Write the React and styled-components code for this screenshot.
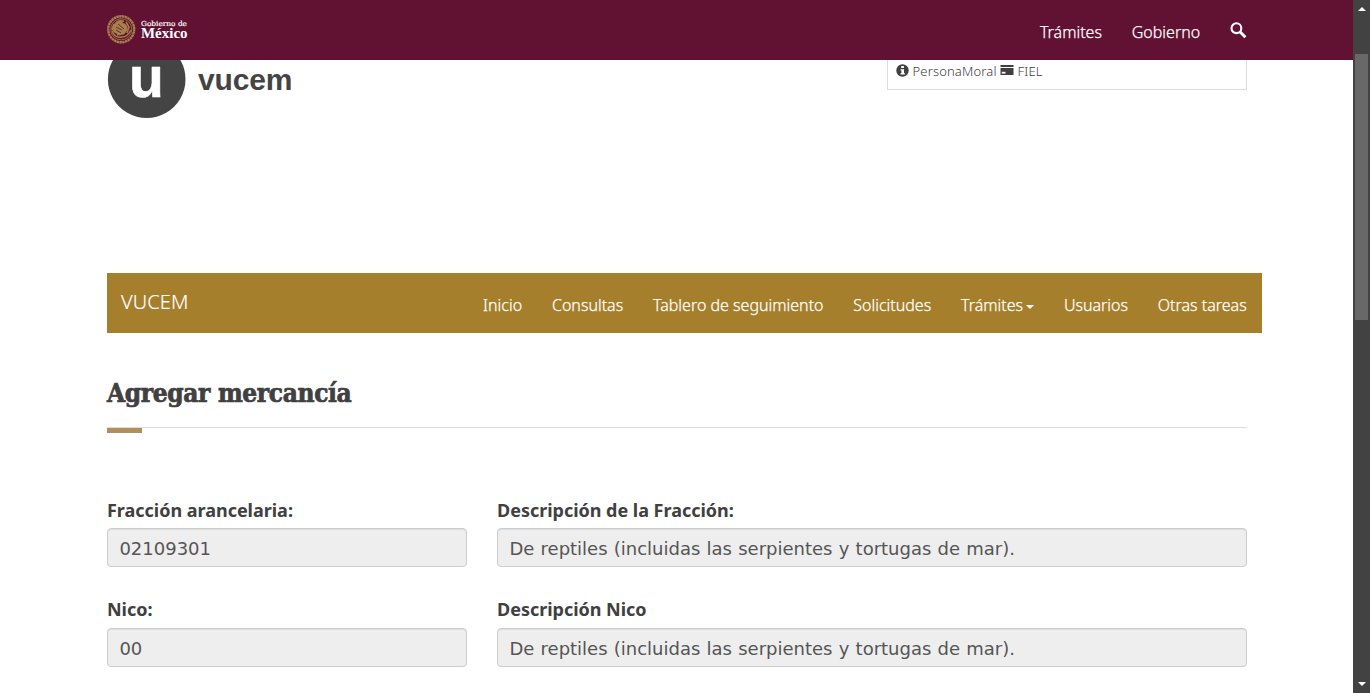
import React from "react";
import styled, { createGlobalStyle } from "styled-components";

const Global = createGlobalStyle`
  * { box-sizing: border-box; }
  html, body { margin: 0; padding: 0; overflow: hidden; background: #fff; }
  body { font-family: "Noto Sans", "Open Sans", sans-serif; color: #404041; }
`;

const Screen = styled.div`
  display: flex;
  width: 1370px;
  height: 693px;
  overflow: hidden;
`;
const Page = styled.div`
  flex: 1;
  min-width: 0;
`;
const TopBar = styled.header`
  height: 60px;
  padding: 0 106px 0 107px;
  background: #611232;
  display: flex;
  justify-content: space-between;
`;
const Crest = styled.svg`
  display: block;
  width: 90px;
  height: 60px;
`;
const TopLinks = styled.nav`
  display: flex;
  gap: 29.8px;
  height: 60px;
  padding-top: 3px;
  align-items: center;
`;
const Link = styled.a`
  display: flex;
  align-items: center;
  color: #fff;
  font-size: 16px;
  font-weight: 300;
  line-height: 24px;
  white-space: nowrap;
  -webkit-text-stroke: 0.25px #fff;
`;
const SearchIcon = styled.svg`
  width: 17px;
  height: 17px;
  margin-top: -2px;
`;
const Brand = styled.section`
  height: 213px;
  padding: 0 106px 0 107px;
  display: flex;
  justify-content: space-between;
  align-items: flex-start;
`;
const Logo = styled.svg`
  display: block;
  width: 200px;
  height: 60px;
  overflow: visible;
`;
const UserBox = styled.div`
  width: 360px;
  height: 30px;
  border: 1px solid #ddd;
  border-top: 0;
  padding: 2px 7.5px 0;
  display: flex;
  align-items: flex-start;
  font-size: 13px;
  line-height: 18px;
  font-weight: 300;
  letter-spacing: 0.15px;
`;
const UserIcon = styled.svg`
  width: ${(p) => p.$w}px;
  height: 13px;
  margin: 2px 4px 0 ${(p) => p.$left || 0}px;
`;
const NavBar = styled.nav`
  margin: 0 91px 0 107px;
  height: 60px;
  padding: 0 15.3px 0 14px;
  background: #a57f2c;
  display: flex;
  justify-content: space-between;
`;
const NavBrand = styled.span`
  color: #fff;
  font-size: 20px;
  font-weight: 300;
  line-height: 58px;
  letter-spacing: 0.1px;
  -webkit-text-stroke: 0.15px #fff;
`;
const NavLinks = styled.div`
  display: flex;
  gap: 29.8px;
  align-items: center;
  padding-top: 3px;
`;
const Caret = styled.i`
  margin: 5px 0 0 3px;
  border: 4px solid transparent;
  border-top-color: #fff;
  border-bottom: 0;
`;
const Main = styled.main`
  padding: 38px 106px 0 107px;
`;
const Title = styled.h1`
  margin: 0;
  height: 57px;
  border-bottom: 1px solid #ddd;
  font: bold 26px/44px "DejaVu Serif Condensed", "DejaVu Serif", serif;
  font-stretch: condensed;
  letter-spacing: -0.35px;
  white-space: nowrap;
  -webkit-text-stroke: 0.7px #404041;
`;
const Accent = styled.div`
  width: 35px;
  height: 5px;
  background: #b38e5d;
`;
const FormRow = styled.div`
  display: grid;
  grid-template-columns: 360px 750px;
  column-gap: 30px;
  margin-top: ${(p) => p.$top}px;
`;
const Field = styled.label`
  display: flex;
  flex-direction: column;
`;
const Label = styled.span`
  font-size: 18px;
  font-weight: 700;
  line-height: 25px;
  letter-spacing: -0.02px;
  height: ${(p) => p.$h}px;
`;
const Input = styled.input`
  width: 100%;
  height: 39px;
  padding: 2px 12px 0 11.4px;
  border: 1px solid #ccc;
  border-radius: 4px;
  background: #eee;
  box-shadow: inset 0 1px 1px rgba(0, 0, 0, 0.075);
  color: #555;
  font: 18px "DejaVu Sans", sans-serif;
  word-spacing: 0.5px;
`;
const ScrollBar = styled.aside`
  width: 17px;
  height: 693px;
  background: #424242;
  display: flex;
  flex-direction: column;
  align-items: center;
  justify-content: space-between;
  padding: 7px 2px;
`;
const Thumb = styled.div`
  width: 13px;
  height: 266px;
  margin: 43px 0 auto;
  background: #686868;
`;
const Arrow = styled.svg`
  width: 8px;
  height: 4px;
`;

const serif = '"DejaVu Serif Condensed", "DejaVu Serif", serif';

function GovernmentLogo() {
  return (
    <Crest viewBox="0 0 90 60">
      <g fill="none" stroke="#a7804b">
        <circle cx="14.2" cy="29.3" r="13" strokeWidth="2.4" strokeDasharray="2.4 .4" />
        <circle cx="14.2" cy="29.3" r="10.6" strokeWidth=".8" />
        <path d="M7 25c2-4 6-6 10-4l-3 2c4 0 7 3 6 7l-3 4-5 1-4-3-2-4z" fill="#a7804b" strokeWidth=".8" />
        <path d="M5 31c2 5 6 7 10 6 4 0 7-3 9-7M7 24l-2 5 4 4M19 22l3 5-2 6M10 35l7-3" strokeWidth="1.5" />
        <path d="M9 27l6 3m-4-6 6 5m-8 1 5 3" stroke="#611232" strokeWidth=".8" />
      </g>
      <text x="34" y="26.2" fill="#fff" fontFamily={serif} fontSize="7" textLength="46" lengthAdjust="spacingAndGlyphs" stroke="#fff" strokeWidth=".15">Gobierno de</text>
      <text x="34" y="37.8" fill="#fff" fontFamily="Liberation Serif, serif" fontSize="14.6" fontWeight="700" textLength="46.5" lengthAdjust="spacingAndGlyphs">México</text>
    </Crest>
  );
}

function VucemLogo() {
  return (
    <Logo viewBox="0 0 200 60">
      <path d="M6 0A38.8 38.8 0 1 0 73.4 0z" fill="#444" />
      <text x="22" y="37.2" fill="#fff" stroke="#fff" strokeWidth=".6" strokeLinejoin="round" fontFamily="Liberation Sans, sans-serif" fontWeight="700" fontSize="57">u</text>
      <text x="91" y="30" fill="#444" fontFamily="Liberation Sans, sans-serif" fontWeight="700" fontSize="30" textLength="94.5">vucem</text>
    </Logo>
  );
}

const fields = [
  { top: 65, h: 30, items: [["Fracción arancelaria:", "02109301"], ["Descripción de la Fracción:", "De reptiles (incluidas las serpientes y tortugas de mar)."]] },
  { top: 30, h: 31, items: [["Nico:", "00"], ["Descripción Nico", "De reptiles (incluidas las serpientes y tortugas de mar)."]] },
];

export default function App() {
  return (
    <Screen>
      <Global />
      <Page>
        <TopBar>
          <GovernmentLogo />
          <TopLinks>
            <Link>Trámites</Link>
            <Link>Gobierno</Link>
            <SearchIcon viewBox="0 0 17 17" fill="none" stroke="#fff">
              <circle cx="6.4" cy="6.2" r="4.9" strokeWidth="2.1" />
              <path d="M10.2 10l5.2 5.2" strokeWidth="3" />
            </SearchIcon>
          </TopLinks>
        </TopBar>
        <Brand>
          <VucemLogo />
          <UserBox>
            <UserIcon $w={13} viewBox="0 0 13 13">
              <circle cx="6.5" cy="6.5" r="6.2" fill="#404041" />
              <path d="M5.2 2h2.7v2H5.2zM4.6 5.2H8v4.1h.9v1.2H4.5V9.3h.9V6.4h-.8z" fill="#fff" />
            </UserIcon>
            PersonaMoral
            <UserIcon $w={14} $left={3} viewBox="0 0 14 13">
              <path d="M.5 1h13v2H.5zM.5 4h13v7H.5z" fill="#404041" />
              <path d="M1.8 7.8h3.7v1.8H1.8z" fill="#fff" />
            </UserIcon>
            FIEL
          </UserBox>
        </Brand>
        <NavBar>
          <NavBrand>VUCEM</NavBrand>
          <NavLinks>
            <Link>Inicio</Link>
            <Link>Consultas</Link>
            <Link>Tablero de seguimiento</Link>
            <Link>Solicitudes</Link>
            <Link>Trámites<Caret /></Link>
            <Link>Usuarios</Link>
            <Link>Otras tareas</Link>
          </NavLinks>
        </NavBar>
        <Main>
          <Title>Agregar mercancía</Title>
          <Accent />
          {fields.map((row) => (
            <FormRow key={row.top} $top={row.top}>
              {row.items.map(([label, value]) => (
                <Field key={label}>
                  <Label $h={row.h}>{label}</Label>
                  <Input readOnly value={value} />
                </Field>
              ))}
            </FormRow>
          ))}
        </Main>
      </Page>
      <ScrollBar>
        <Arrow viewBox="0 0 8 4"><path d="M0 4L4 0l4 4z" fill="#fff" /></Arrow>
        <Thumb />
        <Arrow viewBox="0 0 8 4"><path d="M0 0h8L4 4z" fill="#fff" /></Arrow>
      </ScrollBar>
    </Screen>
  );
}
